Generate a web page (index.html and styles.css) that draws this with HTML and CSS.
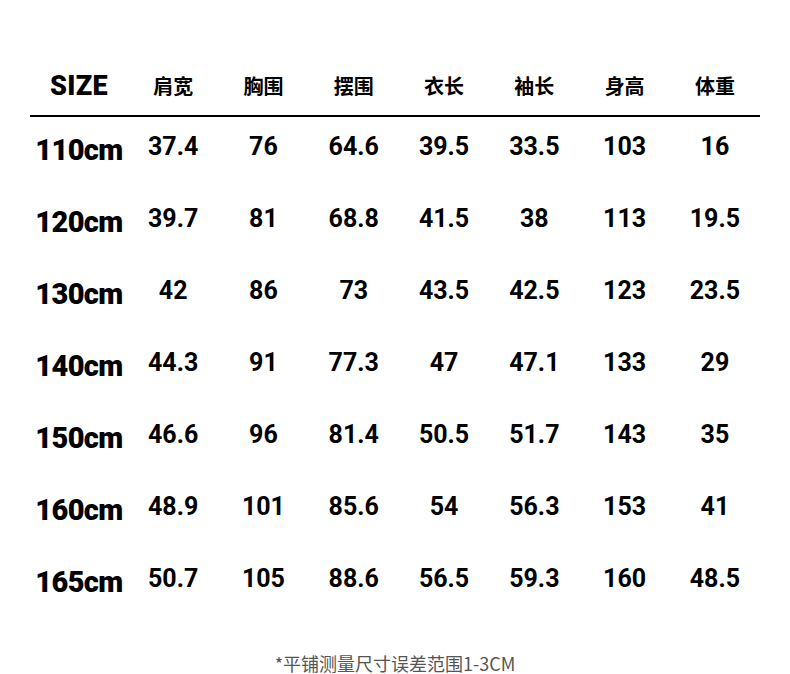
FILE: index.html
```html
<!DOCTYPE html>
<html lang="zh-CN">
<head>
<meta charset="utf-8">
<title>尺码表</title>
<link rel="stylesheet" href="styles.css">
</head>
<body>
<div class="page">
  <div class="table">
    <div class="row head">
      <div class="cell label">SIZE</div>
      <div class="cell cn">肩宽</div>
      <div class="cell cn">胸围</div>
      <div class="cell cn">摆围</div>
      <div class="cell cn">衣长</div>
      <div class="cell cn">袖长</div>
      <div class="cell cn">身高</div>
      <div class="cell cn">体重</div>
    </div>
    <div class="row body">
      <div class="cell size">110cm</div>
      <div class="cell num">37.4</div><div class="cell num">76</div><div class="cell num">64.6</div><div class="cell num">39.5</div><div class="cell num">33.5</div><div class="cell num">103</div><div class="cell num">16</div>
    </div>
    <div class="row body">
      <div class="cell size">120cm</div>
      <div class="cell num">39.7</div><div class="cell num">81</div><div class="cell num">68.8</div><div class="cell num">41.5</div><div class="cell num">38</div><div class="cell num">113</div><div class="cell num">19.5</div>
    </div>
    <div class="row body">
      <div class="cell size">130cm</div>
      <div class="cell num">42</div><div class="cell num">86</div><div class="cell num">73</div><div class="cell num">43.5</div><div class="cell num">42.5</div><div class="cell num">123</div><div class="cell num">23.5</div>
    </div>
    <div class="row body">
      <div class="cell size">140cm</div>
      <div class="cell num">44.3</div><div class="cell num">91</div><div class="cell num">77.3</div><div class="cell num">47</div><div class="cell num">47.1</div><div class="cell num">133</div><div class="cell num">29</div>
    </div>
    <div class="row body">
      <div class="cell size">150cm</div>
      <div class="cell num">46.6</div><div class="cell num">96</div><div class="cell num">81.4</div><div class="cell num">50.5</div><div class="cell num">51.7</div><div class="cell num">143</div><div class="cell num">35</div>
    </div>
    <div class="row body">
      <div class="cell size">160cm</div>
      <div class="cell num">48.9</div><div class="cell num">101</div><div class="cell num">85.6</div><div class="cell num">54</div><div class="cell num">56.3</div><div class="cell num">153</div><div class="cell num">41</div>
    </div>
    <div class="row body">
      <div class="cell size">165cm</div>
      <div class="cell num">50.7</div><div class="cell num">105</div><div class="cell num">88.6</div><div class="cell num">56.5</div><div class="cell num">59.3</div><div class="cell num">160</div><div class="cell num">48.5</div>
    </div>
  </div>
  <div class="note">*平铺测量尺寸误差范围1-3CM</div>
</div>
</body>
</html>
```

FILE: styles.css
```css
* { box-sizing: border-box; }
html, body { margin: 0; padding: 0; background: #fff; }
body { width: 790px; height: 674px; overflow: hidden; color: #000; }
.page { padding-top: 71px; }
.table { margin-left: 30px; width: 730px; }
.row {
  display: grid;
  grid-template-columns: 98px repeat(7, 90.3px);
  align-items: start;
}
.cell { text-align: center; line-height: 30px; white-space: nowrap; }
.head { padding-bottom: 14px; border-bottom: 2px solid #000; }
.head .label {
  font-family: Roboto, "Liberation Sans", sans-serif;
  font-weight: 900;
  font-size: 27px;
  letter-spacing: 0.3px;
}
.head .cn {
  font-family: "Noto Sans CJK SC", sans-serif;
  font-weight: 700;
  font-size: 20px;
}
.body { height: 72px; padding-top: 14px; }
.size {
  font-family: Roboto, "Liberation Sans", sans-serif;
  font-weight: 900;
  font-size: 29px;
  letter-spacing: -0.6px;
  padding-top: 4px;
}
.num {
  font-family: Roboto, "Liberation Sans", sans-serif;
  font-weight: 700;
  font-size: 25px;
  padding-top: 1px;
}
.note {
  margin-top: 30px;
  text-align: center;
  font-family: "Noto Sans CJK SC", sans-serif;
  font-size: 18px;
  line-height: 24px;
  color: #555;
}
```
